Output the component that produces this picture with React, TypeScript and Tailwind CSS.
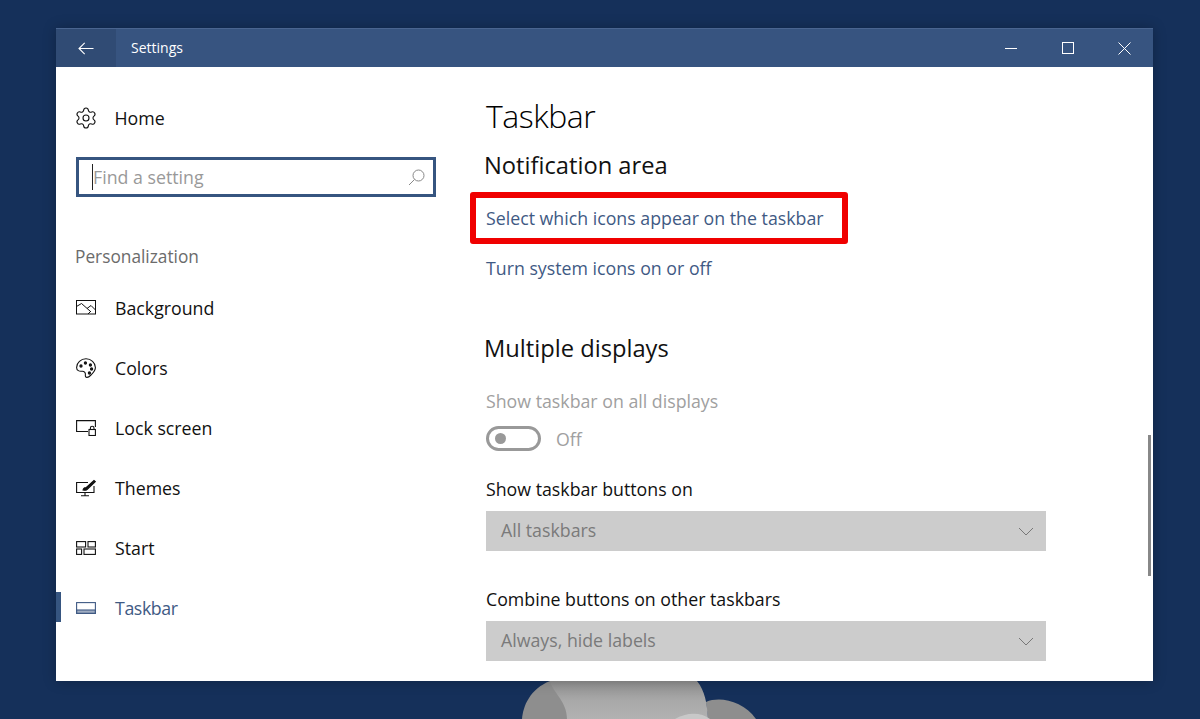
import { Settings } from 'lucide-react';
import type { ReactNode } from 'react';

const font = { fontFamily: '"Open Sans", "Noto Sans", sans-serif' };

function BackgroundIcon() {
  return (
    <svg width="20" height="16" viewBox="0 0 20 16" fill="none" stroke="currentColor" strokeWidth="1">
      <rect x="0.5" y="0.5" width="19" height="13.5" />
      <path d="M0.5 6.5 L5.5 3.5 L14 11 M11 8.5 L15 5.5 L19.5 10 M12 14 L15 11" />
    </svg>
  );
}

function ColorsIcon() {
  return (
    <svg width="20" height="20" viewBox="0 0 20 20" fill="none" stroke="currentColor" strokeWidth="1.1">
      <path d="M10 .8 C15 .8 19.4 4.6 19.4 9.6 C19.4 13 17 15 15 17 C13.8 18.2 12.6 19.4 11 19.4 C9.4 19.4 9.2 18 9.4 16.6 C9.6 14.6 8.2 13 6 13.2 C3.4 13.6 .6 12.6 .6 9.4 C.6 4.6 5 .8 10 .8 Z" />
      <circle cx="5" cy="8" r="1.1" fill="currentColor" />
      <circle cx="9.4" cy="5" r="1.1" fill="currentColor" />
      <circle cx="14.4" cy="7" r="1.1" fill="currentColor" />
      <circle cx="15.6" cy="11" r="1.1" fill="currentColor" />
      <circle cx="13.4" cy="15" r="1.1" fill="currentColor" />
    </svg>
  );
}

function LockScreenIcon() {
  return (
    <svg width="20" height="16" viewBox="0 0 20 16" fill="none" stroke="currentColor" strokeWidth="1.1">
      <path d="M12 11.5 H.6 V.6 H19.4 V7" />
      <rect x="13" y="9.5" width="6.4" height="6" />
      <path d="M14.4 9.5 V8 A1.8 1.8 0 0 1 18 8 V9.5" />
    </svg>
  );
}

function ThemesIcon() {
  return (
    <svg width="20" height="18" viewBox="0 0 20 18" fill="none" stroke="currentColor" strokeWidth="1.1">
      <path d="M12 3.5 H.6 V13.5 H18 V7" />
      <path d="M9 13.5 V16.5 M5 16.8 H13" />
      <path d="M7 11 C7.5 8.5 9 8.5 9.8 9 L18 1.5 L19.3 2.6 L11 10.5 C10.5 11.5 9 11.5 7 11 Z" fill="currentColor" />
    </svg>
  );
}

function StartIcon() {
  return (
    <svg width="20" height="14" viewBox="0 0 20 14" fill="none" stroke="currentColor" strokeWidth="1.1">
      <rect x="0.6" y="0.6" width="9" height="5.4" />
      <rect x="12" y="0.6" width="7.4" height="5.4" />
      <rect x="0.6" y="8" width="5" height="5.4" />
      <rect x="8" y="8" width="11.4" height="5.4" />
    </svg>
  );
}

function TaskbarIcon() {
  return (
    <svg width="20" height="12" viewBox="0 0 20 12" fill="none" stroke="currentColor" strokeWidth="1.1">
      <rect x="0.6" y="0.6" width="18.8" height="10.8" />
      <rect x="0.6" y="8" width="18.8" height="3.4" fill="currentColor" fillOpacity="0.5" />
    </svg>
  );
}

function NavItem({ icon, label, active }: { icon: ReactNode; label: string; active?: boolean }) {
  return (
    <div className={`relative flex h-[60px] items-center pl-[20px] text-[17.75px] ${active ? 'text-[#3f5a84] tracking-[-0.4px]' : 'text-[#111]'}`}>
      {active && <div className="absolute left-0 top-[14px] h-[30px] w-[5px] bg-[#365580]" />}
      <div className="flex w-[39px] shrink-0 items-center">{icon}</div>
      <span>{label}</span>
    </div>
  );
}

function DisabledSelect({ value }: { value: string }) {
  return (
    <div className="mt-[8px] flex h-[40px] w-[560px] items-center justify-between bg-[#cccccc] pl-[15px] pr-[12px] text-[17.75px] text-[#7a7a7a]">
      <span className="pb-[2px]">{value}</span>
      <svg width="16" height="9" viewBox="0 0 16 9" fill="none" stroke="#777" strokeWidth="1">
        <path d="M1 1 L8 8 L15 1" />
      </svg>
    </div>
  );
}

export default function App() {
  return (
    <div className="relative h-[719px] w-[1200px] overflow-hidden bg-[#15305a] pl-[56px] pt-[28px]" style={font}>
      {/* wallpaper cloud peeking out under the window */}
      <svg className="absolute left-[515px] top-[681px]" width="250" height="38" viewBox="0 0 250 38">
        <defs>
          <linearGradient id="cloud" x1="0" y1="0" x2="0" y2="1">
            <stop offset="0" stopColor="#8f8f8f" />
            <stop offset="0.5" stopColor="#a8a8a8" />
            <stop offset="1" stopColor="#b2b2b2" />
          </linearGradient>
        </defs>
        <path d="M7 38 C8 25 15 8 35 0 H60 V38 Z" fill="#8e8e8e" />
        <path d="M191 21 C205 15 228 20 241 38 H193 Z" fill="#8e8e8e" />
        <path d="M35 0 H182 C190 10 192 22 193 38 H52 C52 20 38 12 35 0 Z" fill="url(#cloud)" />
        <path d="M160 38 C170 32 185 30 195 38 Z" fill="#c8c8c8" />
      </svg>

      <div className="relative flex h-[653px] w-[1097px] flex-col bg-white shadow-[0_0_12px_rgba(0,0,0,0.25)]">
        <div className="flex h-[39px] items-center border-t border-[#4a6590] bg-[#375480] text-white">
          <div className="flex h-full w-[60px] items-center justify-center bg-[#304b74]">
            <svg width="16" height="13" viewBox="0 0 16 13" fill="none" stroke="#fff" strokeWidth="1.1">
              <path d="M15.5 6.5 H1 M6.7 .8 L1 6.5 L6.7 12.2" />
            </svg>
          </div>
          <span className="ml-[15px] pb-[2px] text-[14px]">Settings</span>
          <div className="ml-auto flex items-center">
            <div className="flex w-[57px] justify-center"><div className="h-px w-[12px] bg-white" /></div>
            <div className="flex w-[57px] justify-center"><div className="h-[12px] w-[12px] border border-white" /></div>
            <div className="flex w-[57px] justify-center">
              <svg width="13" height="13" viewBox="0 0 13 13" fill="none" stroke="#fff" strokeWidth="1">
                <path d="M.5 .5 L12.5 12.5 M12.5 .5 L.5 12.5" />
              </svg>
            </div>
          </div>
        </div>

        <div className="flex flex-1">
          <div className="w-[430px] shrink-0">
            <div className="mt-[36px] flex h-[30px] items-center pl-[18px] text-[17.75px] text-[#111]">
              <div className="w-[40.5px]"><Settings className="h-[24px] w-[24px]" strokeWidth={1.1} /></div>
              <span>Home</span>
            </div>
            <div className="ml-[20px] mt-[24px] flex h-[40px] w-[360px] items-center justify-between border-[3px] border-[#365580] pl-[13px] pr-[8px] text-[17.75px] text-[#999]">
              <span className="border-l border-[#222]">Find a setting</span>
              <svg width="17" height="17" viewBox="0 0 17 17" fill="none" stroke="#888" strokeWidth="1">
                <circle cx="10.5" cy="6.5" r="5.5" />
                <path d="M6.5 10.5 L1 16" />
              </svg>
            </div>
            <div className="ml-[19px] mt-[48px] flex h-[24px] items-center text-[17.3px] text-[#6b6b6b]">Personalization</div>
            <div className="mt-[9px]">
              <NavItem icon={<BackgroundIcon />} label="Background" />
              <NavItem icon={<ColorsIcon />} label="Colors" />
              <NavItem icon={<LockScreenIcon />} label="Lock screen" />
              <NavItem icon={<ThemesIcon />} label="Themes" />
              <NavItem icon={<StartIcon />} label="Start" />
              <NavItem icon={<TaskbarIcon />} label="Taskbar" active />
            </div>
          </div>

          <div className="flex-1">
            <h1 className="mt-[24px] h-[50px] text-[32px] font-light leading-[50px] tracking-[-0.5px] text-black">Taskbar</h1>
            <h2 className="-ml-[2px] mt-[7px] h-[34px] text-[23.7px] leading-[34px] text-[#111]">Notification area</h2>
            <div className="mt-[22px] h-[28px] text-[17.75px] leading-[28px] text-[#3f5a84]">Select which icons appear on the taskbar</div>
            <div className="mt-[22px] h-[28px] text-[17.75px] leading-[28px] text-[#3f5a84]">Turn system icons on or off</div>
            <h2 className="-ml-[2px] mt-[49px] h-[34px] text-[23.7px] leading-[34px] text-[#111]">Multiple displays</h2>
            <div className="mt-[22px] h-[28px] text-[17.75px] leading-[28px] text-[#a0a0a0]">Show taskbar on all displays</div>
            <div className="mt-[11px] flex h-[25px] items-center text-[17.75px] text-[#a0a0a0]">
              <div className="flex h-[25px] w-[55px] items-center rounded-full border-[3px] border-[#999] pl-[6px]">
                <div className="h-[11px] w-[11px] rounded-full bg-[#999]" />
              </div>
              <span className="ml-[15px] pt-[2px]">Off</span>
            </div>
            <div className="mt-[24px] h-[28px] text-[17.75px] leading-[28px] text-[#111]">Show taskbar buttons on</div>
            <DisabledSelect value="All taskbars" />
            <div className="mt-[34px] h-[28px] text-[17.75px] leading-[28px] text-[#111]">Combine buttons on other taskbars</div>
            <DisabledSelect value="Always, hide labels" />
          </div>
        </div>

        {/* red annotation drawn on top of the screenshot */}
        <div className="absolute left-[414px] top-[164px] h-[52px] w-[378px] rounded-[3px] border-[6px] border-[#f00000]" />
        <div className="absolute left-[1092px] top-[407px] h-[141px] w-[3px] bg-[#888]" />
      </div>
    </div>
  );
}
